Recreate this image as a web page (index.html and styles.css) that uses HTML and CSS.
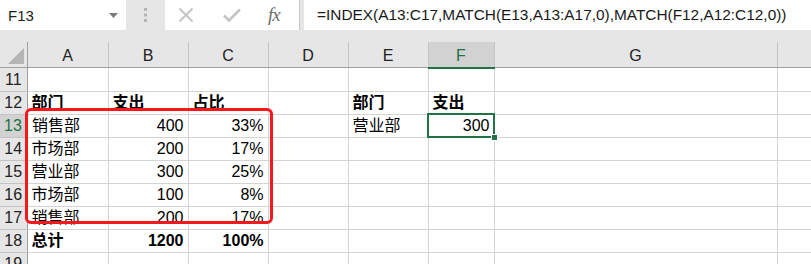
FILE: index.html
```html
<!DOCTYPE html>
<html lang="zh-CN">
<head>
    <meta charset="UTF-8">
    <title>INDEX MATCH</title>
    <link rel="stylesheet" href="styles.css">
</head>
<body>
    <div class="formula-bar">
        <div class="name-box">
            <span>F13</span>
            <svg class="caret" width="9" height="5" viewBox="0 0 9 5"><path d="M0 0h9L4.5 5z" fill="#7a7a7a"/></svg>
        </div>
        <div class="grip">
            <svg width="4" height="14" viewBox="0 0 4 14"><rect x="0" y="0" width="3" height="3" fill="#b4b4b4"/><rect x="0" y="5.5" width="3" height="3" fill="#b4b4b4"/><rect x="0" y="11" width="3" height="3" fill="#b4b4b4"/></svg>
        </div>
        <div class="tools">
            <svg width="16" height="16" viewBox="0 0 16 16"><path d="M1.5 1.5l13 13M14.5 1.5l-13 13" stroke="#c4c4c4" stroke-width="1.8" fill="none"/></svg>
            <svg width="18" height="14" viewBox="0 0 18 14"><path d="M1 7.5l5 5L17 1.5" stroke="#c4c4c4" stroke-width="2.6" fill="none"/></svg>
            <span class="fx">fx</span>
        </div>
        <div class="formula">=INDEX(A13:C17,MATCH(E13,A13:A17,0),MATCH(F12,A12:C12,0))</div>
    </div>

    <div class="sheet">
        <table>
            <colgroup>
                <col style="width: 27px">
                <col style="width: 81px">
                <col style="width: 80px">
                <col style="width: 80px">
                <col style="width: 80px">
                <col style="width: 80px">
                <col style="width: 66px">
                <col style="width: 283px">
                <col style="width: 34px">
            </colgroup>
            <tr class="col-head">
                <th class="corner"><svg width="16" height="16" viewBox="0 0 16 16"><path d="M16 0V16H0z" fill="#b5b5b5"/></svg></th>
                <th>A</th><th>B</th><th>C</th><th>D</th><th>E</th><th class="sel">F</th><th>G</th><th></th>
            </tr>
            <tr>
                <th class="row-head">11</th>
                <td></td><td></td><td></td><td></td><td></td><td></td><td></td><td></td>
            </tr>
            <tr>
                <th class="row-head">12</th>
                <td class="bold">部门</td><td class="bold">支出</td><td class="bold">占比</td><td></td>
                <td class="bold">部门</td><td class="bold">支出</td><td></td><td></td>
            </tr>
            <tr>
                <th class="row-head sel">13</th>
                <td>销售部</td><td class="num">400</td><td class="num">33%</td><td></td>
                <td>营业部</td><td class="num active">300</td><td></td><td></td>
            </tr>
            <tr>
                <th class="row-head">14</th>
                <td>市场部</td><td class="num">200</td><td class="num">17%</td><td></td><td></td><td></td><td></td><td></td>
            </tr>
            <tr>
                <th class="row-head">15</th>
                <td>营业部</td><td class="num">300</td><td class="num">25%</td><td></td><td></td><td></td><td></td><td></td>
            </tr>
            <tr>
                <th class="row-head">16</th>
                <td>市场部</td><td class="num">100</td><td class="num">8%</td><td></td><td></td><td></td><td></td><td></td>
            </tr>
            <tr>
                <th class="row-head">17</th>
                <td>销售部</td><td class="num">200</td><td class="num">17%</td><td></td><td></td><td></td><td></td><td></td>
            </tr>
            <tr>
                <th class="row-head">18</th>
                <td class="bold">总计</td><td class="num bold">1200</td><td class="num bold">100%</td><td></td><td></td><td></td><td></td><td></td>
            </tr>
            <tr>
                <th class="row-head">19</th>
                <td></td><td></td><td></td><td></td><td></td><td></td><td></td><td></td>
            </tr>
        </table>
        <div class="marquee"></div>
    </div>
</body>
</html>
```

FILE: styles.css
```css
html, body {
    margin: 0;
    height: 264px;
    overflow: hidden;
}
body {
    background-color: #e6e6e6;
    font-family: "Liberation Sans", "Noto Sans CJK SC", sans-serif;
    color: #000;
}
.formula-bar {
    display: flex;
    height: 30px;
    margin-bottom: 12px;
}
.name-box {
    width: 126px;
    background: #fff;
    display: flex;
    align-items: center;
    justify-content: space-between;
    padding: 0 8px 0 8px;
    box-sizing: border-box;
    font-size: 15px;
    color: #222;
}
.grip {
    width: 39px;
    display: flex;
    align-items: center;
    justify-content: center;
}
.tools {
    width: 135px;
    background: #fff;
    border-right: 1px solid #c8c8c8;
    display: flex;
    align-items: center;
    padding-left: 13px;
    gap: 29px;
    box-sizing: border-box;
}
.tools .fx {
    font-family: "Liberation Serif", serif;
    font-style: italic;
    font-size: 19px;
    color: #6e6e6e;
    letter-spacing: -1px;
    margin-left: -2px;
}
.formula {
    flex: 1;
    margin-left: 4px;
    background: #fff;
    padding-left: 13px;
    font-size: 15.4px;
    line-height: 30px;
    color: #1a1a1a;
    white-space: nowrap;
}
.sheet {
    position: relative;
    background: #fff;
}
table {
    border-collapse: collapse;
    table-layout: fixed;
    width: 811px;
}
th, td {
    height: 22px;
    padding: 0 4px;
    font-size: 16px;
    line-height: 22px;
    white-space: nowrap;
    overflow: visible;
    vertical-align: bottom;
}
td {
    border: 1px solid #d4d4d4;
    border-top: none;
}
td.num {
    text-align: right;
}
td.bold {
    font-weight: bold;
}
td.active {
    position: relative;
    outline: 2px solid #217346;
    outline-offset: -1px;
}
td.active::after {
    content: "";
    position: absolute;
    right: -4px;
    bottom: -4px;
    width: 5px;
    height: 5px;
    background: #217346;
    border: 1px solid #fff;
}
.col-head th {
    background: #e6e6e6;
    font-weight: normal;
    color: #222;
    text-align: center;
    border-right: 1px solid #c4c4c4;
    border-bottom: 1px solid #9e9e9e;
}
.col-head th.sel {
    background: #d2d2d2;
    color: #217346;
    border-bottom: 2px solid #217346;
}
.col-head th.corner {
    text-align: right;
    padding: 0 3px 3px 0;
    line-height: 0;
    border-right: 1px solid #9e9e9e;
}
.row-head {
    background: #e6e6e6;
    font-weight: normal;
    color: #222;
    text-align: center;
    padding: 0;
    border-right: 1px solid #9e9e9e;
    border-bottom: 1px solid #c4c4c4;
}
.row-head.sel {
    background: #d2d2d2;
    color: #217346;
    border-right: 2px solid #217346;
}
.marquee {
    position: absolute;
    left: 25px;
    top: 66px;
    width: 248px;
    height: 116px;
    box-sizing: border-box;
    border: 3px solid #f5191e;
    border-radius: 6px;
}
```
